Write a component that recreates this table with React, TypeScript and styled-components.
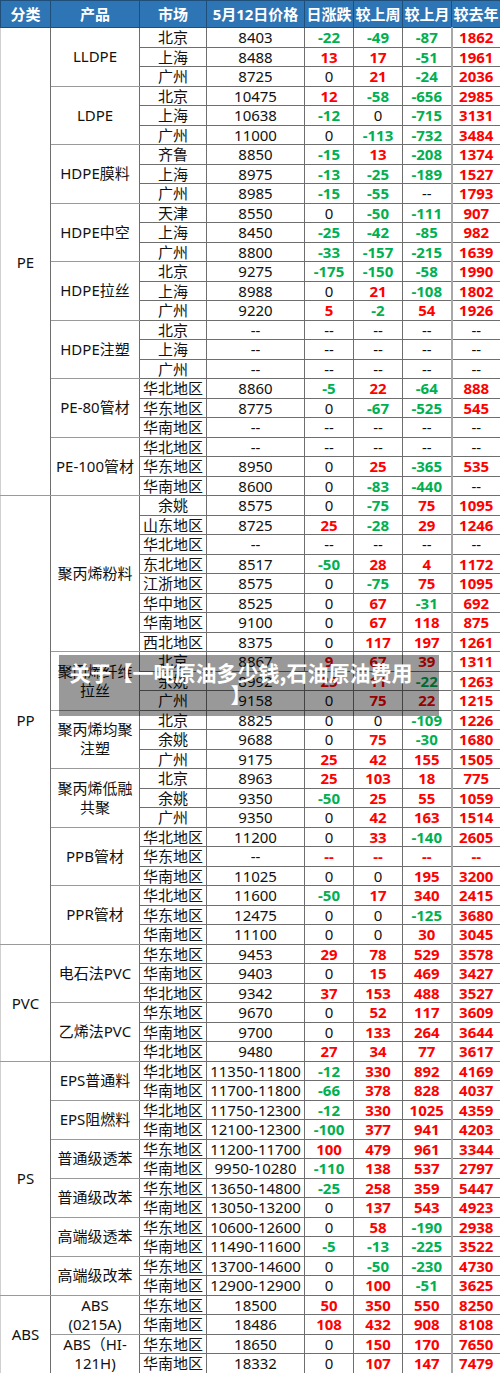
import React from 'react';
import styled, { createGlobalStyle } from 'styled-components';

const GlobalStyle = createGlobalStyle`
  html, body {
    margin: 0;
    padding: 0;
    background: #fff;
  }
  body {
    font-family: "Noto Sans", "Noto Sans CJK SC", sans-serif;
  }
`;

const Page = styled.div`
  position: relative;
  width: 500px;
  height: 1373px;
  overflow: hidden;
`;

const Table = styled.table`
  width: 500px;
  table-layout: fixed;
  border-collapse: collapse;
  border-left: 1px solid #d0d0d0;
  font-size: 15px;
  color: #111;
`;

const HeadCell = styled.th`
  height: 26px;
  padding: 0;
  background: #2e75b6;
  color: #fff;
  font-weight: 700;
  font-size: 15px;
  line-height: 20px;
  text-align: center;
  border: 1px solid #1f4e79;
  white-space: nowrap;
`;

const Cell = styled.td`
  height: 18.5px;
  padding: 0;
  line-height: 18px;
  text-align: center;
  border: 1px solid #6e6e6e;
  white-space: nowrap;
`;

const CatCell = styled(Cell)`
  border-left: none;
  border-top: 1px solid #9a9a9a;
  border-bottom: 1px solid #9a9a9a;
`;

const ProdCell = styled(Cell)`
  white-space: normal;
  line-height: 19px;
  padding: 0 4px;
  border-top: 1px solid #9a9a9a;
  border-bottom: 1px solid #9a9a9a;
`;

const ChangeCell = styled(Cell)<{ $tone: 'red' | 'green' | 'plain'; $last?: boolean }>`
  font-weight: ${(p) => (p.$tone === 'plain' ? 400 : 700)};
  color: ${(p) => (p.$tone === 'red' ? '#ff0000' : p.$tone === 'green' ? '#00b050' : '#111')};
  ${(p) => (p.$last ? 'border-left: 2px solid #a8a8a8; border-right: 1px solid #a8a8a8;' : '')}
`;

const Overlay = styled.div`
  position: absolute;
  left: 59px;
  top: 655px;
  width: 380px;
  height: 61px;
  box-sizing: border-box;
  padding: 6px 24px 6px 8px;
  background: rgba(0, 0, 0, 0.4);
  color: #fff;
  font-family: "Noto Sans CJK SC", sans-serif;
  font-weight: 700;
  font-size: 21px;
  line-height: 22px;
  text-align: center;
  line-break: anywhere;
`;

type Row = [string, string, string, string, string, string];

interface Product {
  name: string;
  rows: Row[];
  redDash?: number[];
}

interface Category {
  name: string;
  products: Product[];
}

const dash = (m: string): Row => [m, '--', '--', '--', '--', '--'];

const data: Category[] = [
  {
    name: 'PE',
    products: [
      {
        name: 'LLDPE',
        rows: [
          ['北京', '8403', '-22', '-49', '-87', '1862'],
          ['上海', '8488', '13', '17', '-51', '1961'],
          ['广州', '8725', '0', '21', '-24', '2036'],
        ],
      },
      {
        name: 'LDPE',
        rows: [
          ['北京', '10475', '12', '-58', '-656', '2985'],
          ['上海', '10638', '-12', '0', '-715', '3131'],
          ['广州', '11000', '0', '-113', '-732', '3484'],
        ],
      },
      {
        name: 'HDPE膜料',
        rows: [
          ['齐鲁', '8850', '-15', '13', '-208', '1374'],
          ['上海', '8975', '-13', '-25', '-189', '1527'],
          ['广州', '8985', '-15', '-55', '--', '1793'],
        ],
      },
      {
        name: 'HDPE中空',
        rows: [
          ['天津', '8550', '0', '-50', '-111', '907'],
          ['上海', '8450', '-25', '-42', '-85', '982'],
          ['广州', '8800', '-33', '-157', '-215', '1639'],
        ],
      },
      {
        name: 'HDPE拉丝',
        rows: [
          ['北京', '9275', '-175', '-150', '-58', '1990'],
          ['上海', '8988', '0', '21', '-108', '1802'],
          ['广州', '9220', '5', '-2', '54', '1926'],
        ],
      },
      {
        name: 'HDPE注塑',
        rows: [dash('北京'), dash('上海'), dash('广州')],
      },
      {
        name: 'PE-80管材',
        rows: [
          ['华北地区', '8860', '-5', '22', '-64', '888'],
          ['华东地区', '8775', '0', '-67', '-525', '545'],
          dash('华南地区'),
        ],
      },
      {
        name: 'PE-100管材',
        rows: [
          dash('华北地区'),
          ['华东地区', '8950', '0', '25', '-365', '535'],
          ['华南地区', '8600', '0', '-83', '-440', '--'],
        ],
      },
    ],
  },
  {
    name: 'PP',
    products: [
      {
        name: '聚丙烯粉料',
        rows: [
          ['余姚', '8575', '0', '-75', '75', '1095'],
          ['山东地区', '8725', '25', '-28', '29', '1246'],
          dash('华北地区'),
          ['东北地区', '8517', '-50', '28', '4', '1172'],
          ['江浙地区', '8575', '0', '-75', '75', '1095'],
          ['华中地区', '8525', '0', '67', '-31', '692'],
          ['华南地区', '9100', '0', '67', '118', '875'],
          ['西北地区', '8375', '0', '117', '197', '1261'],
        ],
      },
      {
        name: '聚丙烯纤维拉丝',
        rows: [
          ['北京', '8867', '9', '67', '39', '1311'],
          ['余姚', '8992', '25', '11', '-22', '1263'],
          ['广州', '9158', '0', '75', '22', '1215'],
        ],
      },
      {
        name: '聚丙烯均聚注塑',
        rows: [
          ['北京', '8825', '0', '0', '-109', '1226'],
          ['余姚', '9688', '0', '75', '-30', '1680'],
          ['广州', '9175', '25', '42', '155', '1505'],
        ],
      },
      {
        name: '聚丙烯低融共聚',
        rows: [
          ['北京', '8963', '25', '103', '18', '775'],
          ['余姚', '9350', '-50', '25', '55', '1059'],
          ['广州', '9350', '0', '42', '163', '1514'],
        ],
      },
      {
        name: 'PPB管材',
        rows: [
          ['华北地区', '11200', '0', '33', '-140', '2605'],
          dash('华东地区'),
          ['华南地区', '11025', '0', '0', '195', '3200'],
        ],
        redDash: [1],
      },
      {
        name: 'PPR管材',
        rows: [
          ['华北地区', '11600', '-50', '17', '340', '2415'],
          ['华东地区', '12475', '0', '0', '-125', '3680'],
          ['华南地区', '11100', '0', '0', '30', '3045'],
        ],
      },
    ],
  },
  {
    name: 'PVC',
    products: [
      {
        name: '电石法PVC',
        rows: [
          ['华东地区', '9453', '29', '78', '529', '3578'],
          ['华南地区', '9403', '0', '15', '469', '3427'],
          ['华北地区', '9342', '37', '153', '488', '3527'],
        ],
      },
      {
        name: '乙烯法PVC',
        rows: [
          ['华东地区', '9670', '0', '52', '117', '3609'],
          ['华南地区', '9700', '0', '133', '264', '3644'],
          ['华北地区', '9480', '27', '34', '77', '3617'],
        ],
      },
    ],
  },
  {
    name: 'PS',
    products: [
      {
        name: 'EPS普通料',
        rows: [
          ['华北地区', '11350-11800', '-12', '330', '892', '4169'],
          ['华南地区', '11700-11800', '-66', '378', '828', '4037'],
        ],
      },
      {
        name: 'EPS阻燃料',
        rows: [
          ['华北地区', '11750-12300', '-12', '330', '1025', '4359'],
          ['华南地区', '12100-12300', '-100', '377', '941', '4203'],
        ],
      },
      {
        name: '普通级透苯',
        rows: [
          ['华东地区', '11200-11700', '100', '479', '961', '3344'],
          ['华南地区', '9950-10280', '-110', '138', '537', '2797'],
        ],
      },
      {
        name: '普通级改苯',
        rows: [
          ['华东地区', '13650-14800', '-25', '258', '359', '5447'],
          ['华南地区', '13050-13200', '0', '137', '543', '4923'],
        ],
      },
      {
        name: '高端级透苯',
        rows: [
          ['华东地区', '10600-12600', '0', '58', '-190', '2938'],
          ['华南地区', '11490-11600', '-5', '-13', '-225', '3522'],
        ],
      },
      {
        name: '高端级改苯',
        rows: [
          ['华东地区', '13700-14600', '0', '-50', '-230', '4730'],
          ['华南地区', '12900-12900', '0', '100', '-51', '3625'],
        ],
      },
    ],
  },
  {
    name: 'ABS',
    products: [
      {
        name: 'ABS (0215A)',
        rows: [
          ['华东地区', '18500', '50', '350', '550', '8250'],
          ['华南地区', '18486', '108', '432', '908', '8108'],
        ],
      },
      {
        name: 'ABS（HI-121H)',
        rows: [
          ['华东地区', '18650', '0', '150', '170', '7650'],
          ['华南地区', '18332', '0', '107', '147', '7479'],
        ],
      },
    ],
  },
];

const toneOf = (v: string, forceRed: boolean): 'red' | 'green' | 'plain' => {
  if (forceRed) return 'red';
  if (v === '0' || v === '--') return 'plain';
  if (v.startsWith('-')) return 'green';
  return 'red';
};

const headers = ['分类', '产品', '市场', '5月12日价格', '日涨跌', '较上周', '较上月', '较去年'];
const widths = [50, 89, 67, 98, 49, 49, 49, 49];

export default function App() {
  return (
    <Page>
      <GlobalStyle />
      <Table>
        <colgroup>
          {widths.map((w, i) => (
            <col key={i} style={{ width: w }} />
          ))}
        </colgroup>
        <thead>
          <tr>
            {headers.map((h) => (
              <HeadCell key={h}>{h}</HeadCell>
            ))}
          </tr>
        </thead>
        <tbody>
          {data.map((cat) => {
            const catRows = cat.products.reduce((n, p) => n + p.rows.length, 0);
            return cat.products.map((prod, pi) =>
              prod.rows.map((row, ri) => {
                const red = (prod.redDash || []).includes(ri);
                return (
                  <tr key={`${cat.name}-${prod.name}-${ri}`}>
                    {pi === 0 && ri === 0 && <CatCell rowSpan={catRows}>{cat.name}</CatCell>}
                    {ri === 0 && <ProdCell rowSpan={prod.rows.length}>{prod.name}</ProdCell>}
                    <Cell>{row[0]}</Cell>
                    <Cell>{row[1]}</Cell>
                    {row.slice(2).map((v, vi) => (
                      <ChangeCell key={vi} $tone={toneOf(v, red)} $last={vi === 3}>
                        {v}
                      </ChangeCell>
                    ))}
                  </tr>
                );
              })
            );
          })}
        </tbody>
      </Table>
      <Overlay>关于【一吨原油多少钱,石油原油费用】</Overlay>
    </Page>
  );
}
